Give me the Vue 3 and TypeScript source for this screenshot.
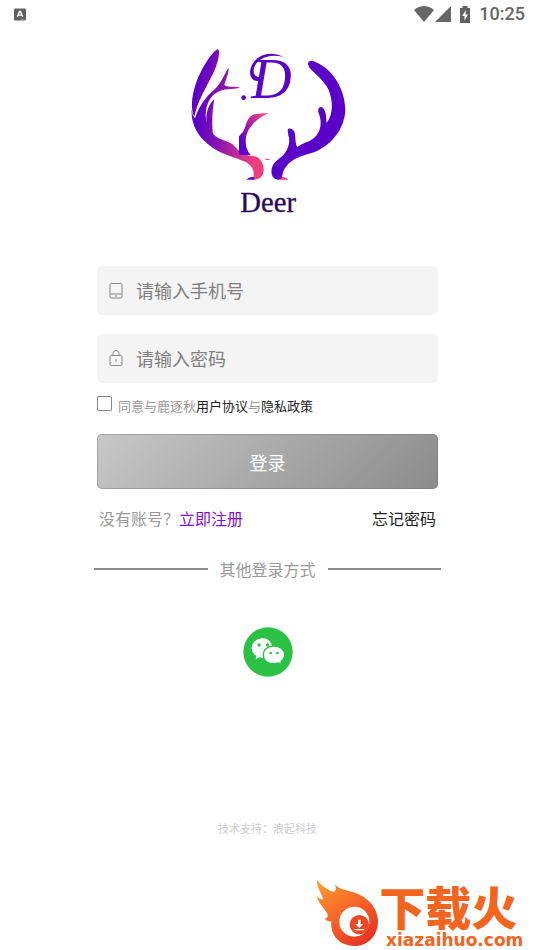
<script setup lang="ts">
import { ref } from 'vue'

const phone = ref('')
const password = ref('')
const agreed = ref(false)
</script>

<template>
  <div class="page">
    <header class="status">
      <svg class="notice" viewBox="0 0 12 12" aria-hidden="true">
        <rect width="12" height="12" rx="1" fill="#606060" />
        <path d="M3.4 8.3 5.5 3h1L8.6 8.3M4.3 6.6h3.4" fill="none" stroke="#fff" stroke-width="1.4" />
        <path d="M6.5 10.7h4" stroke="#bbb" stroke-width=".8" stroke-dasharray="1 .5" />
      </svg>
      <div class="system">
        <svg class="wifi" viewBox="0 0 20 16" aria-hidden="true">
          <path d="M0 4Q10-4 20 4L10 16Z" fill="#666" />
        </svg>
        <svg class="signal" viewBox="0 0 16 16" aria-hidden="true">
          <path d="M16 0V16H0Z" fill="#666" />
        </svg>
        <svg class="battery" viewBox="0 0 12 17" aria-hidden="true">
          <path d="M3.5 0h5v2H11v15H1V2h2.500Z" fill="#606060" />
          <path d="M7 4 3 10h2.500v4.500L9 8.500H6.500Z" fill="#fff" />
        </svg>
        <time>10:25</time>
      </div>
    </header>

    <main>
      <svg class="logo" viewBox="0 0 528 540" role="img" aria-label="Deer">
        <defs>
          <linearGradient id="antler" gradientUnits="userSpaceOnUse" x1="50" y1="210" x2="235" y2="230">
            <stop offset="0" stop-color="#5a00c8" />
            <stop offset=".45" stop-color="#9018ac" />
            <stop offset="1" stop-color="#ee3e80" />
          </linearGradient>
          <linearGradient id="tip" gradientUnits="userSpaceOnUse" x1="45" y1="150" x2="125" y2="175">
            <stop offset="0" stop-color="#5a00c8" />
            <stop offset="1" stop-color="#a51ca2" />
          </linearGradient>
          <linearGradient id="branch" gradientUnits="userSpaceOnUse" x1="182" y1="310" x2="250" y2="222">
            <stop offset="0" stop-color="#5a00c8" />
            <stop offset=".4" stop-color="#8c16b0" />
            <stop offset="1" stop-color="#ee3e80" />
          </linearGradient>
        </defs>
        <path fill="url(#tip)" d="M113 27C119 29 118 46 113 64C101 113 60 158 43 229C33 216 33 172 47 133C58 99 88 43 113 27Z" />
        <path fill="url(#antler)" d="M35 207C36 223 41 230 45 235C58 197 79 169 101 151C123 132 132 103 145 84C149 91 138 119 133 134C139 143 163 138 180 142C171 149 137 144 118 154C94 164 78 188 77 225C78 253 94 282 116 295C137 304 153 307 165 320C177 335 195 344 211 347C240 347 252 370 251 393C248 411 238 420 218 419C226 396 218 379 199 367C167 351 120 344 87 315C50 288 32 247 35 207Z" />
        <path fill="url(#antler)" d="M103 177C97 207 95 249 99 285C76 267 68 211 103 177Z" />
        <path fill="url(#branch)" d="M266 219C244 228 219 246 205 271C192 297 195 326 212 345L177 344V289L183 282C200 270 194 235 219 224C233 220 249 221 266 219Z" />
        <path fill="#5a00c8" d="M200 419C205 411 217 409 222 412L222 419Z" />
        <path fill="#ee3e80" d="M253 359C258 355 267 356 271 360ZM304 411C314 410 322 414 324 419H296Z" />
        <path fill="#5a00c8" d="M384 72C385 61 395 61 405 65C456 86 495 143 496 211C493 270 452 317 402 337C367 347 338 354 318 380C305 394 311 408 301 417C291 423 278 415 275 403C271 380 283 365 303 352C323 336 333 306 325 286L323 269C327 262 338 266 343 275C348 288 344 309 352 321C367 309 386 307 402 294C424 275 426 246 417 222C411 207 418 197 428 203C439 211 438 232 440 249C461 222 459 180 445 148C432 120 404 101 388 83Z" />
        <circle cx="191" cy="173" r="7" fill="#5a00c8" />
        <text class="initial" x="214" y="174">D</text>
        <path fill="#5a00c8" d="M309 51C276 32 236 42 218 71C201 99 214 125 235 123C246 121 251 111 249 103C240 118 220 112 221 91C223 61 264 38 309 51Z" />
        <text class="brand" x="181" y="515">Deer</text>
      </svg>

      <form class="form" @submit.prevent>
        <div class="field">
          <label for="phone" aria-label="手机号">
            <svg viewBox="0 0 14 18" fill="none" stroke="#888" aria-hidden="true">
              <rect x="1" y="1.500" width="12" height="14.500" rx="1.500" />
              <path d="M1 12h12M6 14h2" />
            </svg>
          </label>
          <input id="phone" v-model="phone" type="tel" placeholder="请输入手机号">
        </div>
        <div class="field">
          <label for="password" aria-label="密码">
            <svg viewBox="0 0 14 18" fill="none" stroke="#888" aria-hidden="true">
              <rect x="1" y="5.500" width="12" height="10" rx="1.500" />
              <path d="M4 5.500V3.500a3 3 0 0 1 6 0v2M7 9v3" />
            </svg>
          </label>
          <input id="password" v-model="password" type="password" placeholder="请输入密码">
        </div>
        <div class="agreement">
          <input id="agree" v-model="agreed" type="checkbox">
          <span><label for="agree">同意与鹿逐秋</label><a href="#terms">用户协议</a>与<a href="#privacy">隐私政策</a></span>
        </div>
        <button class="submit" type="submit">登录</button>
        <div class="links">
          <span>没有账号？<a class="register" href="#register">立即注册</a></span>
          <a href="#forgot">忘记密码</a>
        </div>
      </form>

      <div class="divider">其他登录方式</div>

      <button class="wechat" type="button" aria-label="微信登录">
        <svg viewBox="0 0 150 150" aria-hidden="true">
          <circle cx="75" cy="75" r="74" fill="#2ac145" />
          <path fill="#fff" d="M60 34C40 34 26 47 26 63C26 73 31 81 40 87L38 97L50 91C57 93 63 93 69 92C96 89 96 35 60 34Z" />
          <path fill="#fff" stroke="#2ac145" stroke-width="4" d="M93 57C74 57 61 68 61 84C61 101 76 112 95 110C100 110 104 109 107 108L116 113L114 104C121 98 125 92 125 84C125 68 111 57 93 57Z" />
          <g fill="#2ac145"><circle cx="48" cy="54" r="5" /><circle cx="74" cy="54" r="5" /><circle cx="83" cy="78" r="4" /><circle cx="103" cy="78" r="4" /></g>
        </svg>
      </button>

      <p class="support">技术支持：浪起科技</p>
    </main>

    <footer>
      <svg class="download" viewBox="0 0 672 240" role="img" aria-label="下载火 xiazaihuo.com">
        <defs>
          <linearGradient id="flame" x1="0" y1="0" x2=".7" y2="1">
            <stop offset="0" stop-color="#ffa02c" />
            <stop offset=".5" stop-color="#f76a2a" />
            <stop offset="1" stop-color="#e73520" />
          </linearGradient>
        </defs>
        <path fill="url(#flame)" d="M21 29C31 43 43 53 62 63C78 71 82 55 73 42C89 59 102 58 124 65C170 76 203 112 204 152C204 197 173 229 132 228C87 226 59 194 64 153C57 158 49 152 44 145C51 145 55 139 52 131C45 116 25 101 20 77C28 87 35 90 40 87C32 66 20 51 21 29Z" />
        <circle cx="133" cy="155" r="45" fill="#fff" />
        <circle cx="148" cy="164" r="29" fill="#ed4624" />
        <path fill="#fff" d="M144 149h8v13h8l-12 12-12-12h8ZM133 177h30v4h-30Z" />
        <text class="download-name" x="208" y="164">下载火</text>
        <text class="download-site" x="228" y="228">xiazaihuo.com</text>
      </svg>
    </footer>
  </div>
</template>

<style>
body {
  margin: 0;
  background: #fff;
}
</style>

<style scoped>
.page {
  display: flex;
  flex-direction: column;
  min-height: 100vh;
  color: #999;
  font: 16px/24px "Noto Sans CJK SC", sans-serif;
}
.page * {
  box-sizing: border-box;
}
svg {
  display: block;
}
a {
  color: #222;
  text-decoration: none;
}
.status {
  display: flex;
  align-items: center;
  justify-content: space-between;
  height: 28px;
  padding: 0 9px 0 14px;
}
.notice {
  width: 12px;
  height: 13px;
}
.system {
  display: flex;
  align-items: center;
}
.wifi {
  width: 20px;
  height: 16px;
}
.signal {
  width: 16px;
  height: 16px;
  margin-left: 1px;
}
.battery {
  width: 12px;
  height: 17px;
  margin: 0 8px;
}
time {
  color: #666;
  font: 500 18px/28px Roboto, sans-serif;
}
main {
  display: flex;
  flex-direction: column;
  align-items: center;
  padding-left: 1px;
}
.logo {
  width: 176px;
  height: 180px;
  margin: 12px 0 46px;
}
.initial {
  fill: #5a00c8;
  font: italic 168px "Liberation Serif", serif;
}
.brand {
  fill: #2a0a58;
  stroke: #2a0a58;
  stroke-width: 1;
  font: 86px "Liberation Serif", serif;
}
.form {
  width: 64%;
}
.field {
  display: flex;
  align-items: center;
  height: 49px;
  margin-bottom: 19px;
  padding: 0 12px;
  border-radius: 5px;
  background: #f4f4f4;
}
.field svg {
  width: 14px;
  height: 18px;
}
.field input {
  flex: 1;
  min-width: 0;
  height: 100%;
  margin-left: 13px;
  padding: 0 0 1px;
  border: 0;
  outline: 0;
  background: none;
  color: #333;
  font: 18px "Noto Sans CJK SC", sans-serif;
}
.field input::placeholder {
  color: #808080;
  opacity: 1;
}
.agreement {
  display: flex;
  gap: 6px;
  margin-top: -6px;
  font-size: 13px;
  line-height: 20px;
}
.agreement input {
  appearance: none;
  width: 15px;
  height: 15px;
  margin: 0;
  border: 1px solid #888;
  border-radius: 1px;
  background: #fff;
}
.agreement input:checked {
  background: #8416d6;
}
.submit {
  display: block;
  width: 100%;
  height: 55px;
  margin-top: 18px;
  padding: 0;
  border: 1px solid rgb(110 110 110 / 40%);
  border-radius: 5px;
  background: linear-gradient(135deg, #c8c8c8, #8b8b8b) border-box;
  color: #fff;
  font: 18px "Noto Sans CJK SC", sans-serif;
}
.links {
  display: flex;
  justify-content: space-between;
  padding: 17px 2px 0;
}
.links .register {
  color: #8112d4;
}
.divider {
  display: flex;
  align-items: center;
  gap: 12px;
  width: 65%;
  margin-top: 27px;
}
.divider::before,
.divider::after {
  content: "";
  flex: 1;
  height: 2px;
  background: #8c8c8c;
}
.wechat {
  width: 50px;
  height: 50px;
  margin-top: 46px;
  padding: 0;
  border: 0;
  border-radius: 50%;
  background: none;
}
.support {
  margin: 141px 0 0;
  color: #ccc;
  font-size: 11px;
  line-height: 20px;
}
footer {
  display: flex;
  justify-content: flex-end;
  margin-top: auto;
}
.download {
  width: 224px;
  height: 80px;
}
.download-name {
  fill: #f3641f;
  font: 900 138px "Noto Sans CJK SC", sans-serif;
}
.download-site {
  fill: #f3641f;
  font: bold 51px "DejaVu Sans", sans-serif;
}
</style>
